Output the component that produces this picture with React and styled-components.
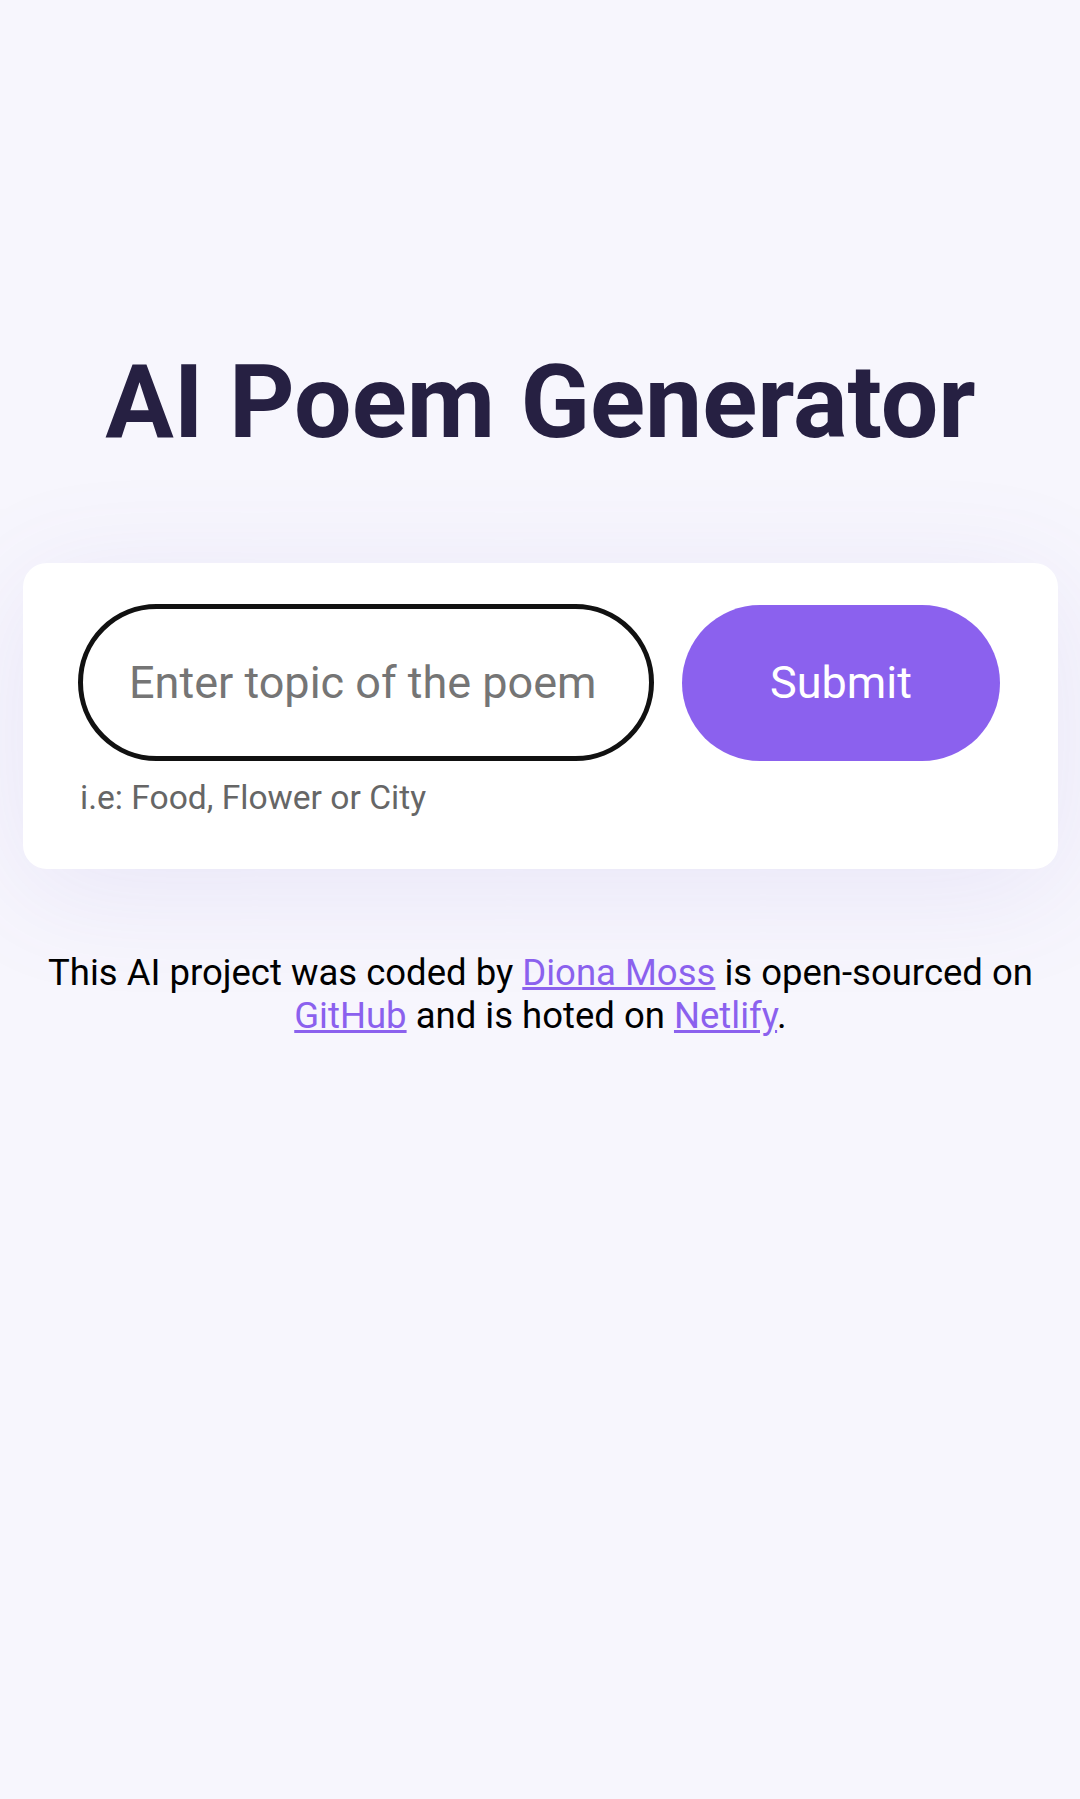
import React from "react";
import styled, { createGlobalStyle } from "styled-components";

const GlobalStyle = createGlobalStyle`
  html, body {
    margin: 0;
    padding: 0;
    background: #f7f6fd;
    font-family: Roboto, "Liberation Sans", sans-serif;
  }
  * { box-sizing: border-box; }
`;

const Page = styled.main`
  min-height: 1799px;
  padding: 341px 22px 0 23px;
  display: flex;
  flex-direction: column;
  align-items: stretch;
`;

const Title = styled.h1`
  margin: 0;
  font-size: 102px;
  line-height: 1.2;
  font-weight: 700;
  color: #262042;
  text-align: center;
`;

const Card = styled.form`
  margin-top: 100px;
  background: #ffffff;
  border-radius: 24px;
  padding: 41px 58px 50px 55px;
  box-shadow: 0 20px 120px rgba(110, 90, 200, 0.1);
`;

const Row = styled.div`
  display: flex;
  align-items: center;
  gap: 28px;
`;

const Input = styled.input`
  width: 576px;
  height: 157px;
  border: 5px solid #111111;
  border-radius: 999px;
  padding: 0 18px 0 46px;
  font-family: Roboto, "Liberation Sans", sans-serif;
  font-size: 45px;
  color: #222;
  background: #fff;
  outline: none;
  &::placeholder {
    color: #757575;
  }
`;

const Button = styled.button`
  width: 318px;
  height: 156px;
  border: none;
  border-radius: 999px;
  background: #8b61ee;
  color: #ffffff;
  font-family: Roboto, "Liberation Sans", sans-serif;
  font-size: 45px;
  cursor: pointer;
`;

const Hint = styled.div`
  margin-top: 17px;
  padding-left: 2px;
  font-size: 33.6px;
  line-height: 1.2;
  color: #666666;
`;

const Footer = styled.p`
  margin: 82px 0 0;
  font-size: 36.5px;
  line-height: 43px;
  color: #000000;
  text-align: center;
`;

const Link = styled.a`
  color: #8b61ee;
  text-decoration: underline;
`;

export default function App() {
  return (
    <>
      <GlobalStyle />
      <Page>
        <Title>AI Poem Generator</Title>
        <Card onSubmit={(e) => e.preventDefault()}>
          <Row>
            <Input type="text" placeholder="Enter topic of the poem" />
            <Button type="submit">Submit</Button>
          </Row>
          <Hint>i.e: Food, Flower or City</Hint>
        </Card>
        <Footer>
          This AI project was coded by <Link href="#">Diona Moss</Link> is
          open-sourced on <Link href="#">GitHub</Link> and is hoted on{" "}
          <Link href="#">Netlify</Link>.
        </Footer>
      </Page>
    </>
  );
}
